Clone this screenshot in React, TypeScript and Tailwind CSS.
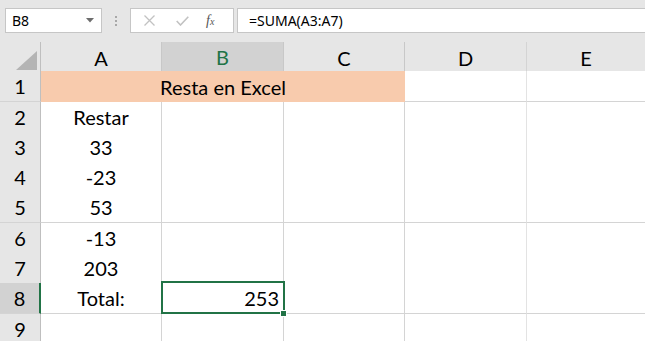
import React from "react";

const CELL = "[font-family:Lato,'Open_Sans',sans-serif] text-[20px] text-black";

function RowHead({ n, sel }: { n: number; sel?: boolean }) {
  return (
    <div
      className={
        "flex items-center justify-center border-b border-b-[#d4d4d4] " +
        CELL +
        (sel
          ? " bg-[#d2d2d2] border-r-2 border-r-[#217346] text-[#217346]"
          : " bg-[#e6e6e6] border-r border-r-[#bfbfbf]")
      }
    >
      {n}
    </div>
  );
}

const body = "bg-white border-b border-b-[#d4d4d4] flex items-center";

function Row({
  n,
  h,
  a,
  sel,
}: {
  n: number;
  h: string;
  a?: string;
  sel?: boolean;
}) {
  return (
    <div className={"grid grid-cols-[41px_121px_122px_121px_122px_1fr] " + h + (sel ? " relative z-10" : "")}>
      <RowHead n={n} sel={sel} />
      <div className={body + " border-r border-r-[#d4d4d4] justify-center " + CELL}>{a}</div>
      <div className={body + " border-r border-r-[#d4d4d4] relative justify-end pr-[4px] " + CELL}>
        {sel && (
          <>
            <span>253</span>
            <div className="absolute z-10 left-[-1px] top-[-2px] w-[124px] h-[33px] border-2 border-[#217346]" />
            <div className="absolute z-20 right-[-4px] bottom-[-4px] w-[7px] h-[7px] bg-[#217346] border border-white" />
          </>
        )}
      </div>
      <div className={body + " border-r border-r-[#d4d4d4]"} />
      <div className={body + " border-r border-r-[#e3e3e3]"} />
      <div className={body} />
    </div>
  );
}

export default function App() {
  return (
    <div className="w-[645px] h-[341px] overflow-hidden bg-white">
      {/* formula bar */}
      <div className="h-[42px] bg-[#e6e6e6] flex items-start pt-[8px] [font-family:'Noto_Sans',sans-serif] text-[14px] text-black">
        <div className="ml-[5px] w-[97px] h-[25px] bg-white border border-[#c6c6c6] flex items-center pl-[6px] pr-[7px]">
          <span className="flex-1 leading-none">B8</span>
          <svg width="8" height="5" viewBox="0 0 8 5">
            <path d="M0 0H8L4 4.5Z" fill="#6d6d6d" />
          </svg>
        </div>
        <div className="w-[28px] h-[25px] flex flex-col items-center justify-center gap-[2px]">
          <div className="w-[2px] h-[2px] bg-[#a8a8a8]" />
          <div className="w-[2px] h-[2px] bg-[#a8a8a8]" />
          <div className="w-[2px] h-[2px] bg-[#a8a8a8]" />
        </div>
        <div className="w-[104px] h-[25px] bg-white border border-[#c6c6c6] flex items-center">
          <svg className="ml-[13px]" width="11" height="11" viewBox="0 0 11 11">
            <path d="M0.5 0.5L10.5 10.5M10.5 0.5L0.5 10.5" stroke="#c2c2c2" strokeWidth="1.3" />
          </svg>
          <svg className="ml-[21px]" width="13" height="10" viewBox="0 0 13 10">
            <path d="M0.7 5L4.5 9L12.3 0.7" stroke="#c2c2c2" strokeWidth="1.6" fill="none" />
          </svg>
          <span className="ml-[17px] [font-family:'Liberation_Serif',serif] italic text-[14px] text-[#555] leading-none">
            f<span className="text-[10px]">x</span>
          </span>
        </div>
        <div className="ml-[3px] flex-1 h-[25px] bg-white border border-[#c6c6c6] border-r-0 flex items-center pl-[11px]">
          <span className="leading-none">=SUMA(A3:A7)</span>
        </div>
      </div>

      {/* column header */}
      <div className={"grid grid-cols-[41px_121px_122px_121px_122px_1fr] h-[29px] " + CELL}>
        <div className="bg-[#e6e6e6] border-r border-r-[#bfbfbf] border-b border-b-[#bfbfbf] flex items-end justify-end pr-[3px] pb-[3px]">
          <svg width="21" height="19" viewBox="0 0 21 19">
            <path d="M21 0V19H0Z" fill="#b4b4b4" />
          </svg>
        </div>
        <div className="bg-[#e6e6e6] border-r border-r-[#c8c8c8] border-b border-b-[#bfbfbf] flex items-center justify-center">A</div>
        <div className="bg-[#d2d2d2] border-r border-r-[#c8c8c8] border-b-2 border-b-[#217346] flex items-center justify-center text-[#217346]">B</div>
        <div className="bg-[#e6e6e6] border-r border-r-[#c8c8c8] border-b border-b-[#bfbfbf] flex items-center justify-center">C</div>
        <div className="bg-[#e6e6e6] border-r border-r-[#d4d4d4] border-b border-b-[#bfbfbf] flex items-center justify-center">D</div>
        <div className="bg-[#e6e6e6] border-b border-b-[#bfbfbf] flex items-center justify-center">E</div>
      </div>

      {/* row 1 with merged A1:C1 */}
      <div className="grid grid-cols-[41px_121px_122px_121px_122px_1fr] h-[31px]">
        <RowHead n={1} />
        <div className={"col-span-3 bg-[#f8cbad] flex items-center justify-center " + CELL}>Resta en Excel</div>
        <div className={body + " border-r border-r-[#e3e3e3]"} />
        <div className={body} />
      </div>
      <Row n={2} h="h-[30px]" a="Restar" />
      <Row n={3} h="h-[30px]" a="33" />
      <Row n={4} h="h-[30px]" a="-23" />
      <Row n={5} h="h-[31px]" a="53" />
      <Row n={6} h="h-[30px]" a="-13" />
      <Row n={7} h="h-[30px]" a="203" />
      <Row n={8} h="h-[31px]" a="Total:" sel />
      <Row n={9} h="h-[30px]" />
    </div>
  );
}
